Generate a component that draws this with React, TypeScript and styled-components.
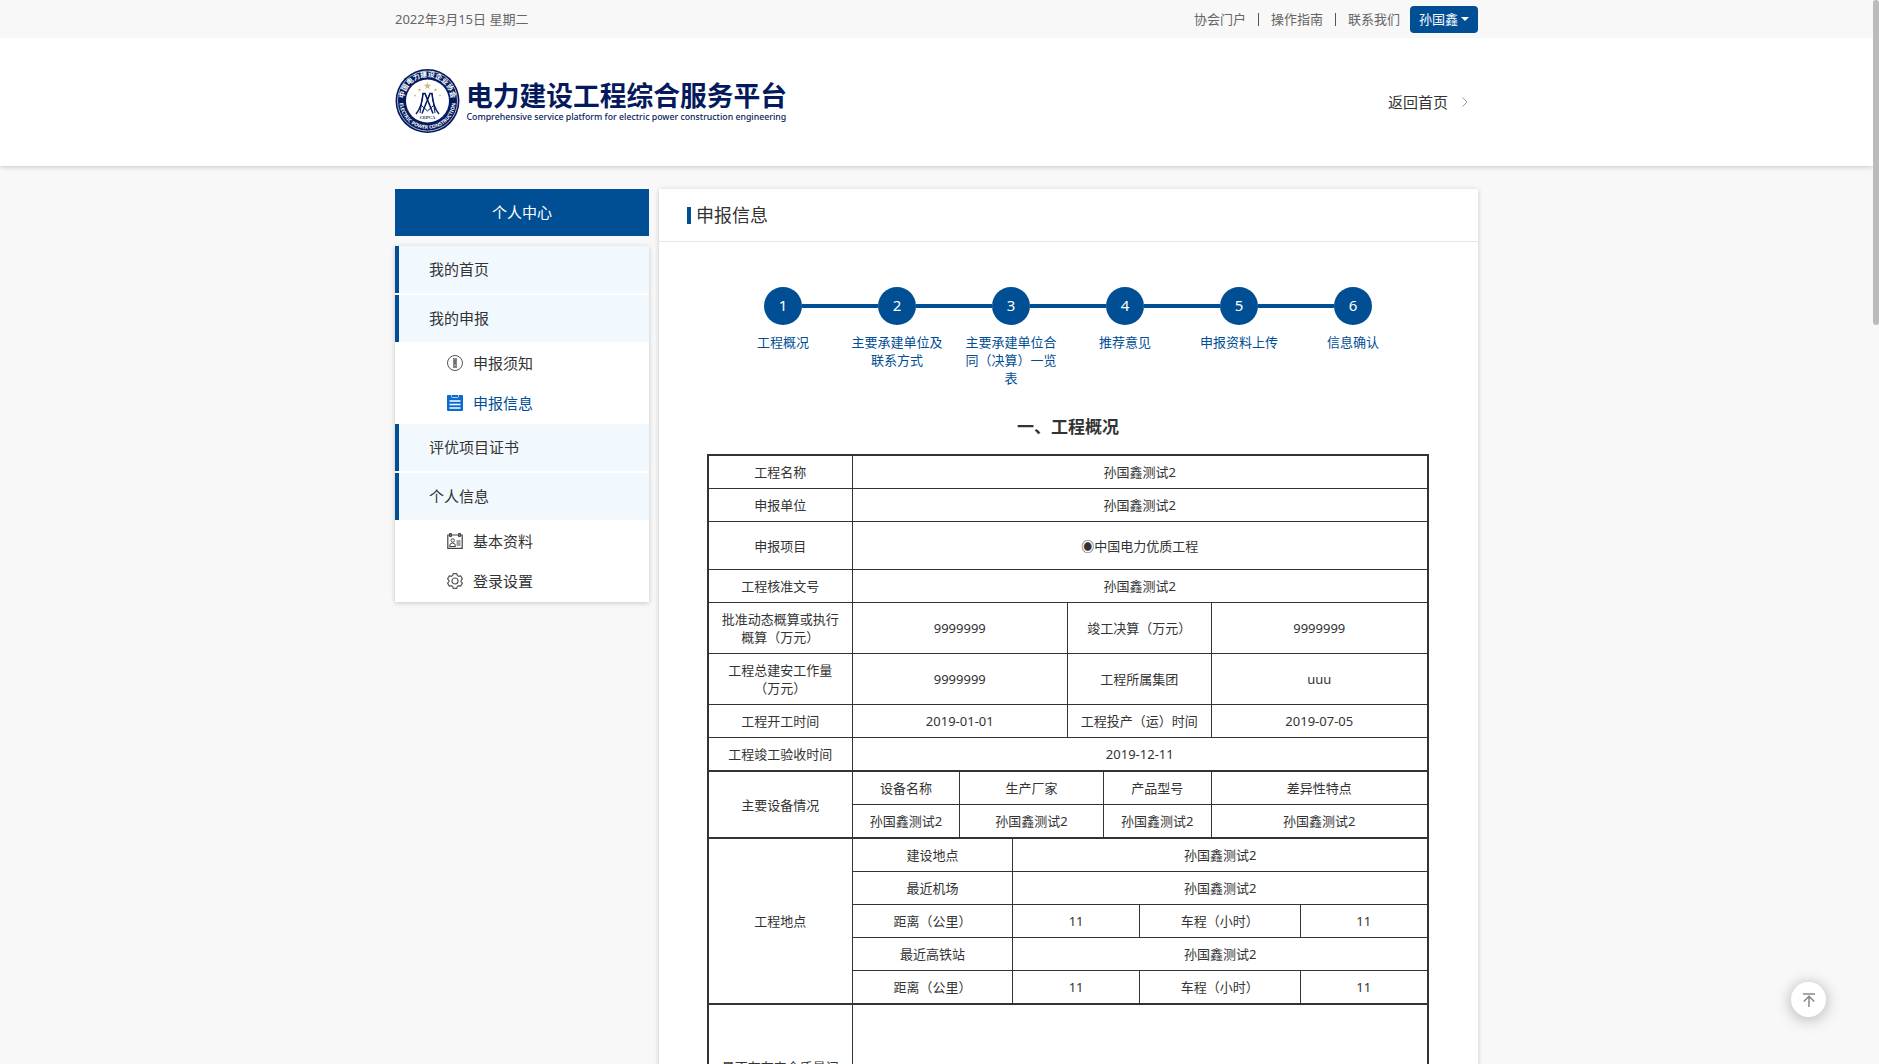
import React, { useEffect, useRef, useState } from 'react';
import styled, { createGlobalStyle } from 'styled-components';

const BLUE = '#004e94';
const NAVY = '#041a5c';
const INK = '#333333';
const FONT = '"Noto Sans", "Noto Sans CJK SC", sans-serif';

const GlobalStyle = createGlobalStyle`
  *, *::before, *::after { box-sizing: border-box; }
  body { margin: 0; font-family: ${FONT}; font-size: 13px; line-height: 18px; color: ${INK}; background: #f8f8f8; }
  a { color: inherit; text-decoration: none; }
  button { font: inherit; }
  ul, ol { list-style: none; margin: 0; padding: 0; }
  h1, h2, h3 { margin: 0; }
`;

const Shell = styled.div`
  display: flex;
  height: 100vh;
`;

const Page = styled.div`
  flex: 1;
  min-width: 0;
  overflow-y: scroll;
  scrollbar-width: none;
`;

const ScrollTrack = styled.div`
  flex: 0 0 6px;
  overflow: hidden;
`;

const ScrollThumb = styled.div`
  border-radius: 3px;
  background: #bbbbbb;
`;

const Container = styled.div`
  width: 1083px;
  max-width: 100%;
  margin: 0 auto;
`;

const TopBar = styled.div`
  position: relative;
  z-index: 1;
  background: #f8f8f8;
  color: #666666;
`;

const TopRow = styled(Container)`
  display: flex;
  align-items: center;
  justify-content: space-between;
  height: 38px;
`;

const TopActions = styled.div`
  display: flex;
  align-items: center;
  gap: 10px;
`;

const TopLinks = styled.nav`
  display: flex;
  align-items: center;
  gap: 12px;
`;

const Divider = styled.span`
  width: 1px;
  height: 13px;
  background: #555555;
`;

const UserButton = styled.button`
  display: flex;
  align-items: center;
  gap: 3px;
  height: 27px;
  padding: 0 9px;
  border: 0;
  border-radius: 4px;
  background: ${BLUE};
  color: #ffffff;
`;

const Caret = styled.span`
  border: 4px solid transparent;
  border-top-color: #ffffff;
  border-bottom-width: 0;
`;

const Header = styled.header`
  background: #ffffff;
  box-shadow: 0 1px 5px rgba(0, 0, 0, 0.2);
`;

const HeaderRow = styled(Container)`
  display: flex;
  align-items: center;
  justify-content: space-between;
  height: 128px;
`;

const BackLink = styled.a`
  display: flex;
  align-items: center;
  gap: 14px;
  padding-right: 10px;
  font-size: 15px;
`;

const Main = styled(Container)`
  display: flex;
  align-items: flex-start;
  gap: 10px;
  padding: 23px 0 40px;
`;

const Sidebar = styled.aside`
  flex: 0 0 254px;
  display: flex;
  flex-direction: column;
  gap: 10px;
`;

const SidebarTitle = styled.h2`
  height: 47px;
  background: ${BLUE};
  color: #ffffff;
  font-size: 15px;
  font-weight: 400;
  line-height: 47px;
  text-align: center;
`;

const Menu = styled.ul`
  background: #ffffff;
  box-shadow: 0 1px 5px rgba(0, 0, 0, 0.2);
`;

const MenuLink = styled.a`
  display: block;
  height: 47px;
  margin-bottom: 2px;
  padding-left: 30px;
  border-left: 4px solid ${BLUE};
  background: #f1f8fe;
  font-size: 15px;
  line-height: 47px;
`;

const SubLink = styled.a<{ $active?: boolean }>`
  display: flex;
  align-items: center;
  gap: 10px;
  height: 40px;
  padding: 0 0 3px 52px;
  color: ${(p) => (p.$active ? BLUE : INK)};
  font-size: 15px;
`;

const Card = styled.section`
  flex: 1;
  min-width: 0;
  min-height: 3254px;
  background: #ffffff;
  box-shadow: 0 1px 5px rgba(0, 0, 0, 0.2);
`;

const CardHeader = styled.div`
  padding: 15px 28px 14px;
  border-bottom: 1px solid #e6e6e6;
`;

const CardTitle = styled.h1`
  display: flex;
  align-items: center;
  gap: 5px;
  font-size: 18px;
  font-weight: 400;
  line-height: 23px;
  &::before { content: ''; width: 4px; height: 17px; background: ${BLUE}; }
`;

const CardBody = styled.div`
  padding: 45px 49px 40px 48px;
`;

const Steps = styled.ol`
  display: flex;
  justify-content: center;
`;

const Step = styled.li`
  display: flex;
  flex-direction: column;
  gap: 8px;
  width: 114px;
  color: ${BLUE};
  text-align: center;
`;

const StepTrack = styled.div`
  display: flex;
  align-items: center;
`;

const StepLine = styled.span<{ $show: boolean }>`
  flex: 1;
  height: 4px;
  background: ${(p) => (p.$show ? BLUE : 'transparent')};
`;

const StepDot = styled.span`
  width: 38px;
  height: 38px;
  border-radius: 50%;
  background: ${BLUE};
  color: #ffffff;
  font-size: 15px;
  line-height: 36px;
`;

const StepLabel = styled.span`
  padding: 0 11px;
`;

const SectionTitle = styled.h3`
  margin: 28px 0 15px;
  font-size: 17px;
  font-weight: 700;
  line-height: 24px;
  text-align: center;
`;

const Sheet = styled.div`
  border: 2px solid ${INK};
`;

const Table = styled.table`
  width: 100%;
  table-layout: fixed;
  border-collapse: separate;
  border-spacing: 0;
  & + & { border-top: 2px solid ${INK}; }
`;

const Cell = styled.td<{ $tall?: boolean }>`
  height: ${(p) => (p.$tall ? 48 : 33)}px;
  padding: 7px 8px;
  border-right: 1px solid ${INK};
  border-bottom: 1px solid ${INK};
  font-weight: 400;
  text-align: center;
  vertical-align: middle;
  &:last-child { border-right: 0; }
  &[rowspan] { border-bottom: 0; }
  tr:last-child > & { height: 32px; border-bottom: 0; }
`;

const GroupCell = styled(Cell).attrs({ as: 'th', scope: 'rowgroup' })``;

const ReviewCell = styled(Cell)`
  tr:last-child > && { height: 142px; }
`;

const ToTop = styled.button`
  position: fixed;
  right: 53px;
  bottom: 47px;
  display: flex;
  align-items: center;
  justify-content: center;
  width: 35px;
  height: 35px;
  padding: 0;
  border: 0;
  border-radius: 50%;
  background: #ffffff;
  box-shadow: 0 2px 16px rgba(0, 0, 0, 0.3);
`;

const Star = ({ x, y, r }: { x: number; y: number; r: number }) => {
  const pts = Array.from({ length: 10 }, (_, i) => {
    const a = (Math.PI / 5) * i - Math.PI / 2;
    const d = i % 2 ? r * 0.4 : r;
    return `${x + d * Math.cos(a)},${y + d * Math.sin(a)}`;
  }).join(' ');
  return <polygon points={pts} fill="#cdbd7c" />;
};

const Logo = () => (
  <svg width="392" height="66" viewBox="0 0 1568 264" role="img" aria-label="电力建设工程综合服务平台">
    <defs>
      <path id="arcTop" d="M 20.4 79.6 A 47 47 0 1 1 109.6 79.6" />
      <path id="arcBottom" d="M 13 45 A 56 56 0 1 0 117 45" />
    </defs>
    <g transform="translate(0 -4) scale(2)">
      <circle cx="65" cy="66" r="64" fill={NAVY} />
      <circle cx="65" cy="66" r="60" fill="none" stroke="#aab2cc" strokeWidth="2" />
      <circle cx="65" cy="66" r="43" fill="#ffffff" />
      <g fill="#ffffff" fontFamily={FONT} fontWeight="700" textAnchor="middle">
        <text fontSize="14"><textPath href="#arcTop" startOffset="50%">中国电力建设企业协会</textPath></text>
        <text fontSize="10"><textPath href="#arcBottom" startOffset="50%">ELECTRIC POWER CONSTRUCTION</textPath></text>
      </g>
      <Star x={65} y={36} r={8} />
      <Star x={49} y={44} r={4} />
      <Star x={81} y={44} r={4} />
      <Star x={40} y={55} r={3} />
      <Star x={90} y={55} r={3} />
      <g fill="none" stroke={NAVY} strokeWidth="3">
        <path d="M42 92 Q54 78 56 51 L60 51 L76 91" />
        <path d="M88 92 Q76 78 74 51 L70 51 L54 91" />
        <path d="M56 51 L50 90 M60 51 L65 62 L70 51 M74 51 L80 90 M52 74 L65 86 L78 74" strokeWidth="2" />
      </g>
      <text x="65" y="101" fill={NAVY} fontFamily='"Liberation Serif", serif' fontSize="9" fontWeight="700" textAnchor="middle">CEPCA</text>
    </g>
    <text x="284" y="146" fill={NAVY} fontFamily={FONT} fontSize="107" fontWeight="700">电力建设工程综合服务平台</text>
    <text x="286" y="204" fill={NAVY} fontFamily={FONT} fontSize="35" fontWeight="500">Comprehensive service platform for electric power construction engineering</text>
  </svg>
);

const NoticeIcon = () => (
  <svg width="16" height="16" viewBox="0 0 16 16" fill="none" stroke="#555555">
    <circle cx="8" cy="8" r="7.5" />
    <rect x="6.5" y="3.5" width="3" height="9" fill="#aaaaaa" stroke="#888888" />
    <path d="M8 4.5v5M8 11v1" stroke="#333333" />
  </svg>
);

const FormIcon = () => (
  <svg width="16" height="16" viewBox="0 0 16 16" fill="none" stroke="#ffffff">
    <rect width="16" height="16" rx="1" fill="#0a6bd0" stroke="none" />
    <path d="M4.5 0v1.5q0 1 1 1h5q1 0 1-1V0" stroke="#b5d5f5" />
    <path d="M2.5 6h11M2.5 9.500h11M2.5 13h11" strokeWidth="1.3" />
  </svg>
);

const ProfileIcon = () => (
  <svg width="16" height="16" viewBox="0 0 16 16" fill="none" stroke="#444444">
    <path d="M3.500 2H.8v13.400h14.400V2H12.500M5 2h6" strokeWidth="1.200" />
    <path d="M2.500.5h2v3h-2zM11.500.5h2v3h-2z" fill="#777777" />
    <circle cx="5.700" cy="7.500" r="1.700" />
    <path d="M2.500 13.500q0-3.500 3-3.500t3 3.500zM9.500 8h4M9.500 10h4M9.500 12h4" />
  </svg>
);

const GearIcon = () => (
  <svg width="16" height="16" viewBox="0 0 16 16" fill="none" stroke="#555555" strokeWidth="1.200" strokeLinejoin="round">
    <path d="M6.200.7h3.600l.6 1.900 1.200.7 2-.5 1.800 3.100-1.400 1.500v1.200l1.400 1.500-1.800 3.100-2-.5-1.200.7-.6 1.900H6.200l-.6-1.900-1.200-.7-2 .5L.6 10.100 2 8.600V7.400L.6 5.900l1.800-3.100 2 .5 1.200-.7z" />
    <circle cx="8" cy="8" r="3" />
  </svg>
);

const steps = ['工程概况', '主要承建单位及联系方式', '主要承建单位合同（决算）一览表', '推荐意见', '申报资料上传', '信息确认'];

const Cols = ({ widths }: { widths: string[] }) => (
  <colgroup>{widths.map((w, i) => <col key={i} style={{ width: w }} />)}</colgroup>
);

const NAME = '孙国鑫测试2';

export default function App() {
  const pageRef = useRef<HTMLDivElement>(null);
  const [thumb, setThumb] = useState({ height: 0, top: 0 });

  const measure = () => {
    const el = pageRef.current;
    if (!el) return;
    const ratio = el.clientHeight / el.scrollHeight;
    setThumb({ height: Math.round(el.clientHeight * ratio), top: Math.round(el.scrollTop * ratio) });
  };

  useEffect(() => {
    measure();
    window.addEventListener('resize', measure);
    return () => window.removeEventListener('resize', measure);
  }, []);

  return (
    <Shell>
      <GlobalStyle />
      <Page ref={pageRef} onScroll={measure}>
        <TopBar>
          <TopRow>
            <span>2022年3月15日 星期二</span>
            <TopActions>
              <TopLinks>
                <a href="#portal">协会门户</a>
                <Divider />
                <a href="#guide">操作指南</a>
                <Divider />
                <a href="#contact">联系我们</a>
              </TopLinks>
              <UserButton type="button">孙国鑫<Caret /></UserButton>
            </TopActions>
          </TopRow>
        </TopBar>
        <Header>
          <HeaderRow>
            <Logo />
            <BackLink href="#home">
              返回首页
              <svg width="6" height="10" viewBox="0 0 6 10" fill="none" stroke="#999999"><path d="M.5.5 5 5 .5 9.500" /></svg>
            </BackLink>
          </HeaderRow>
        </Header>
        <Main as="main">
          <Sidebar>
            <SidebarTitle>个人中心</SidebarTitle>
            <Menu>
              <li><MenuLink href="#index">我的首页</MenuLink></li>
              <li>
                <MenuLink href="#apply">我的申报</MenuLink>
                <SubLink href="#notice"><NoticeIcon />申报须知</SubLink>
                <SubLink href="#info" $active><FormIcon />申报信息</SubLink>
              </li>
              <li><MenuLink href="#certificates">评优项目证书</MenuLink></li>
              <li>
                <MenuLink href="#personal">个人信息</MenuLink>
                <SubLink href="#profile"><ProfileIcon />基本资料</SubLink>
                <SubLink href="#settings"><GearIcon />登录设置</SubLink>
              </li>
            </Menu>
          </Sidebar>
          <Card>
            <CardHeader><CardTitle>申报信息</CardTitle></CardHeader>
            <CardBody>
              <Steps>
                {steps.map((label, i) => (
                  <Step key={label}>
                    <StepTrack>
                      <StepLine $show={i > 0} />
                      <StepDot>{i + 1}</StepDot>
                      <StepLine $show={i < steps.length - 1} />
                    </StepTrack>
                    <StepLabel>{label}</StepLabel>
                  </Step>
                ))}
              </Steps>
              <SectionTitle>一、工程概况</SectionTitle>
              <Sheet>
                <Table>
                  <Cols widths={['20%', '30%', '20%', '30%']} />
                  <tbody>
                    <tr><Cell>工程名称</Cell><Cell colSpan={3}>{NAME}</Cell></tr>
                    <tr><Cell>申报单位</Cell><Cell colSpan={3}>{NAME}</Cell></tr>
                    <tr><Cell $tall>申报项目</Cell><Cell $tall colSpan={3}>◉中国电力优质工程</Cell></tr>
                    <tr><Cell>工程核准文号</Cell><Cell colSpan={3}>{NAME}</Cell></tr>
                    <tr><Cell>批准动态概算或执行概算（万元）</Cell><Cell>9999999</Cell><Cell>竣工决算（万元）</Cell><Cell>9999999</Cell></tr>
                    <tr><Cell>工程总建安工作量（万元）</Cell><Cell>9999999</Cell><Cell>工程所属集团</Cell><Cell>uuu</Cell></tr>
                    <tr><Cell>工程开工时间</Cell><Cell>2019-01-01</Cell><Cell>工程投产（运）时间</Cell><Cell>2019-07-05</Cell></tr>
                    <tr><Cell>工程竣工验收时间</Cell><Cell colSpan={3}>2019-12-11</Cell></tr>
                  </tbody>
                </Table>
                <Table>
                  <Cols widths={['20%', '15%', '20%', '15%', '30%']} />
                  <tbody>
                    <tr><GroupCell rowSpan={2}>主要设备情况</GroupCell><Cell>设备名称</Cell><Cell>生产厂家</Cell><Cell>产品型号</Cell><Cell>差异性特点</Cell></tr>
                    <tr><Cell>{NAME}</Cell><Cell>{NAME}</Cell><Cell>{NAME}</Cell><Cell>{NAME}</Cell></tr>
                  </tbody>
                </Table>
                <Table>
                  <Cols widths={['20%', '22.4%', '17.6%', '22.4%', '17.6%']} />
                  <tbody>
                    <tr><GroupCell rowSpan={5}>工程地点</GroupCell><Cell>建设地点</Cell><Cell colSpan={3}>{NAME}</Cell></tr>
                    <tr><Cell>最近机场</Cell><Cell colSpan={3}>{NAME}</Cell></tr>
                    <tr><Cell>距离（公里）</Cell><Cell>11</Cell><Cell>车程（小时）</Cell><Cell>11</Cell></tr>
                    <tr><Cell>最近高铁站</Cell><Cell colSpan={3}>{NAME}</Cell></tr>
                    <tr><Cell>距离（公里）</Cell><Cell>11</Cell><Cell>车程（小时）</Cell><Cell>11</Cell></tr>
                  </tbody>
                </Table>
                <Table>
                  <Cols widths={['20%', '80%']} />
                  <tbody>
                    <tr><ReviewCell>是否存在安全质量问题</ReviewCell><ReviewCell /></tr>
                  </tbody>
                </Table>
              </Sheet>
            </CardBody>
          </Card>
        </Main>
        <ToTop type="button" aria-label="返回顶部" onClick={() => pageRef.current?.scrollTo({ top: 0 })}>
          <svg width="12" height="14" viewBox="0 0 12 14" fill="none" stroke="#888888" strokeWidth="1.500">
            <path d="M0 1h12M6 14V3.500M.8 8.500 6 3.200l5.200 5.300" />
          </svg>
        </ToTop>
      </Page>
      <ScrollTrack>
        <ScrollThumb style={{ height: thumb.height, marginTop: thumb.top }} />
      </ScrollTrack>
    </Shell>
  );
}
